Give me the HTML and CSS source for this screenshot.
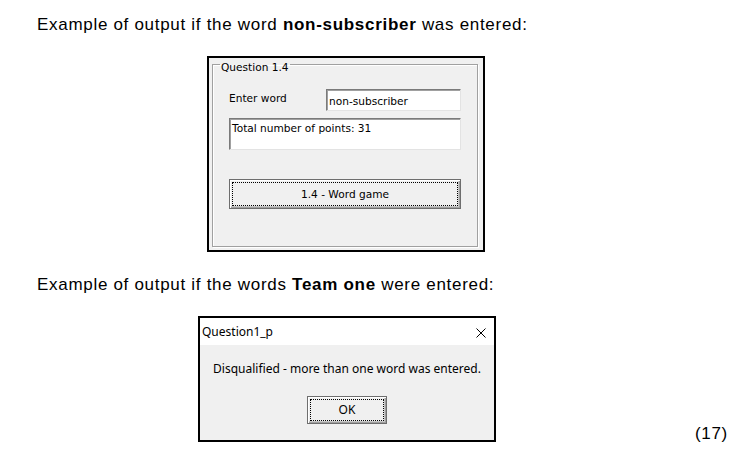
FILE: index.html
```html
<!DOCTYPE html>
<html lang="en">
<head>
<meta charset="utf-8">
<title>Question 1.4 output examples</title>
<link rel="stylesheet" href="styles.css">
</head>
<body>
<div class="page">
  <p class="doc-line">Example of output if the word <b>non-subscriber</b> was entered:</p>

  <div class="win1">
    <fieldset class="group">
      <legend class="group-title">Question 1.4</legend>
      <div class="group-body">
        <div class="row">
          <span class="lbl">Enter word</span>
          <div class="field">non-subscriber</div>
        </div>
        <div class="memo">Total number of points: 31</div>
        <div class="btn btn-wide">1.4 - Word game</div>
      </div>
    </fieldset>
  </div>

  <p class="doc-line doc-line2">Example of output if the words <b>Team one</b> were entered:</p>

  <div class="last">
    <div class="dlg">
      <div class="dlg-title">
        <span class="dlg-caption">Question1_p</span>
        <svg class="dlg-close" width="10" height="10" viewBox="0 0 10 10"><path d="M0.5 0.5L9.5 9.5M9.5 0.5L0.5 9.5" stroke="#000" stroke-width="1" fill="none"/></svg>
      </div>
      <div class="dlg-body">
        <div class="dlg-msg">Disqualified - more than one word was entered.</div>
        <div class="btn btn-ok">OK</div>
      </div>
    </div>
    <span class="marks">(17)</span>
  </div>
</div>
</body>
</html>
```

FILE: styles.css
```css
html, body {
  margin: 0;
  padding: 0;
  background: #fff;
}
body {
  font-family: "Liberation Sans", Arial, sans-serif;
  font-size: 17px;
  letter-spacing: 0.7px;
  color: #000;
}
.page {
  padding: 16px 8px 0 37px;
}
.doc-line {
  margin: 0;
  line-height: 18px;
}
.doc-line b {
  font-weight: bold;
}
.doc-line2 {
  margin-top: 24px;
}

/* Window 1 */
.win1 {
  margin: 22px 0 0 170px;
  width: 278px;
  height: 196px;
  box-sizing: border-box;
  border: 2px solid #000;
  background: #f0f0f0;
  padding: 0 5px 0 3px;
  font-family: "DejaVu Sans", Verdana, sans-serif;
  font-size: 10.6px;
  letter-spacing: 0;
}
.group {
  margin: -3px 0 0 0;
  padding: 0;
  border: 1px solid #a0a0a0;
  box-shadow: 1px 1px 0 #fff, inset 1px 1px 0 #fff;
  min-width: 0;
}
.group-title {
  margin-left: 7px;
  padding: 6px 1px 0 1px;
  line-height: 13px;
}
.group-body {
  padding: 15px 16px 37px 16px;
}
.row {
  display: flex;
  justify-content: space-between;
  align-items: flex-start;
}
.lbl {
  margin-top: 3px;
  line-height: 13px;
}
.field {
  width: 135px;
  height: 22px;
  box-sizing: border-box;
  background: #fff;
  border: 1px solid;
  border-color: #7a7a7a #e3e3e3 #e3e3e3 #7a7a7a;
  box-shadow: inset 1px 1px 0 #a0a0a0;
  padding: 5px 0 0 2px;
  line-height: 13px;
  overflow: hidden;
}
.memo {
  margin-top: 7px;
  height: 32px;
  box-sizing: border-box;
  background: #fff;
  border: 1px solid;
  border-color: #7a7a7a #e3e3e3 #e3e3e3 #7a7a7a;
  box-shadow: inset 1px 1px 0 #a0a0a0;
  padding: 3px 0 0 2px;
  line-height: 13px;
}
.btn {
  box-sizing: border-box;
  background: #f0f0f0;
  border: 1px solid #6e6e6e;
  box-shadow: inset 1px 1px 0 #fff, inset -1px -1px 0 #a0a0a0, inset -2px -2px 0 #c8c8c8;
  outline: 1px dotted #000;
  outline-offset: -4px;
  display: flex;
  align-items: center;
  justify-content: center;
}
.btn-wide {
  margin-top: 29px;
  height: 30px;
  line-height: 13px;
}

/* Dialog */
.last {
  display: flex;
  align-items: flex-end;
  margin-top: 22px;
}
.dlg {
  margin-left: 161px;
  width: 298px;
  height: 126px;
  box-sizing: border-box;
  border: 2px solid #000;
  font-family: "Noto Sans", "Open Sans", sans-serif;
  font-size: 12px;
  letter-spacing: 0;
  display: flex;
  flex-direction: column;
}
.dlg-title {
  height: 27px;
  box-sizing: border-box;
  background: #fff;
  display: flex;
  justify-content: space-between;
  align-items: flex-start;
  padding: 6px 8px 0 2px;
}
.dlg-caption {
  line-height: 16px;
}
.dlg-close {
  display: block;
  margin-top: 4px;
}
.dlg-body {
  flex: 1;
  background: #f0f0f0;
  padding: 16px 0 16px 0;
  display: flex;
  flex-direction: column;
  align-items: center;
}
.dlg-msg {
  line-height: 16px;
}
.btn-ok {
  margin-top: 19px;
  width: 80px;
  height: 28px;
  line-height: 16px;
}
.marks {
  margin-left: auto;
  line-height: 16px;
}
```
